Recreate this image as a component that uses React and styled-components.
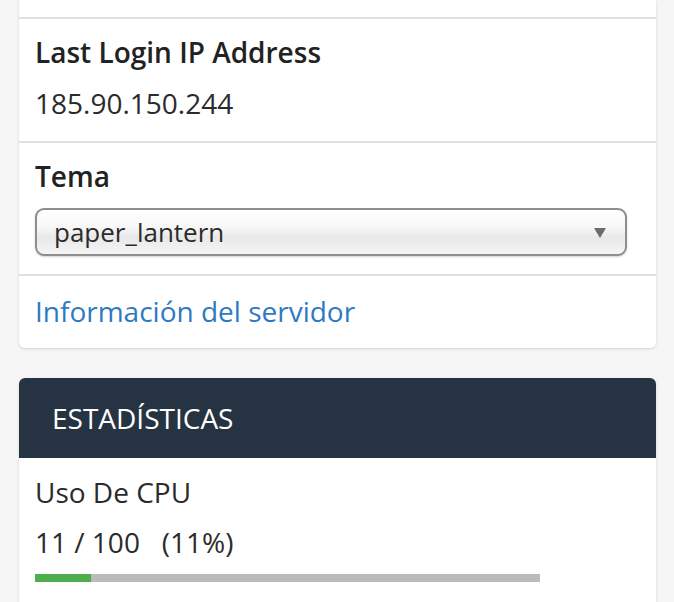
import React from "react";
import styled, { createGlobalStyle } from "styled-components";

const GlobalStyle = createGlobalStyle`
  html, body {
    margin: 0;
    padding: 0;
    background: #f6f6f6;
    font-family: "Open Sans", "Liberation Sans", sans-serif;
    color: #2b2b2b;
  }
`;

const stats = [{ label: "Uso De CPU", used: 11, max: 100 }];

const App = () => {
  return (
    <>
      <GlobalStyle />
      <Page>
        <Panel>
          <Filler />
          <Row>
            <Label>Last Login IP Address</Label>
            <Value>185.90.150.244</Value>
          </Row>
          <Row>
            <Label>Tema</Label>
            <SelectBox>
              <span>paper_lantern</span>
              <Caret />
            </SelectBox>
          </Row>
          <Row last>
            <LinkText href="#">Información del servidor</LinkText>
          </Row>
        </Panel>

        <StatsPanel>
          <Header>ESTADÍSTICAS</Header>
          {stats.map((s) => {
            const pct = Math.round((s.used / s.max) * 100);
            return (
              <StatBody key={s.label}>
                <StatName>{s.label}</StatName>
                <StatValue>
                  {s.used} / {s.max}
                  {"   "}({pct}%)
                </StatValue>
                <Bar>
                  <Fill style={{ width: `${pct}%` }} />
                </Bar>
              </StatBody>
            );
          })}
        </StatsPanel>
      </Page>
    </>
  );
};

const Page = styled.div`
  display: flex;
  flex-direction: column;
  gap: 30px;
  padding: 0 18px 0 19px;
`;

const Panel = styled.div`
  background: #fff;
  border-radius: 0 0 6px 6px;
  box-shadow: 0 1px 3px rgba(0, 0, 0, 0.14);
`;

const Filler = styled.div`
  height: 17px;
`;

const Row = styled.div`
  border-top: 2px solid #e0e0e0;
  padding: ${(p) => (p.last ? "16px 16px 18px" : "14px 16px 18px")};
`;

const Label = styled.div`
  font-size: 28px;
  font-weight: 600;
  line-height: 38px;
  color: #222;
  margin-bottom: 13px;
`;

const Value = styled.div`
  font-size: 28px;
  line-height: 38px;
  color: #2b2b2b;
  margin-bottom: 1px;
`;

const SelectBox = styled.div`
  box-sizing: border-box;
  width: 592px;
  height: 48px;
  display: flex;
  align-items: center;
  justify-content: space-between;
  padding: 0 19px 0 17px;
  border: 2px solid #8e8e8e;
  border-radius: 9px;
  background: linear-gradient(#ffffff 0%, #f7f7f7 40%, #e8e8e8 62%, #f5f5f5 100%);
  box-shadow: 0 1px 2px rgba(0, 0, 0, 0.18);
  font-size: 26px;
  color: #2b2b2b;
`;

const Caret = styled.span`
  width: 0;
  height: 0;
  border-left: 6px solid transparent;
  border-right: 6px solid transparent;
  border-top: 10px solid #6b6b6b;
  margin-top: 2px;
`;

const LinkText = styled.a`
  display: block;
  font-size: 28px;
  line-height: 38px;
  color: #2e79c3;
  text-decoration: none;
`;

const StatsPanel = styled.div`
  background: #fff;
  border-radius: 6px 6px 0 0;
  box-shadow: 0 1px 3px rgba(0, 0, 0, 0.14);
  overflow: hidden;
`;

const Header = styled.div`
  height: 80px;
  display: flex;
  align-items: center;
  padding: 0 33px;
  background: #263342;
  color: #fff;
  font-size: 28px;
`;

const StatBody = styled.div`
  padding: 15px 16px 20px;
`;

const StatName = styled.div`
  font-size: 28px;
  line-height: 38px;
  margin-bottom: 12px;
`;

const StatValue = styled.div`
  font-size: 28px;
  line-height: 38px;
  white-space: pre;
  margin-bottom: 13px;
`;

const Bar = styled.div`
  width: 505px;
  height: 8px;
  background: #bbbbbb;
`;

const Fill = styled.div`
  height: 100%;
  background: #4cae4c;
`;

export default App;
